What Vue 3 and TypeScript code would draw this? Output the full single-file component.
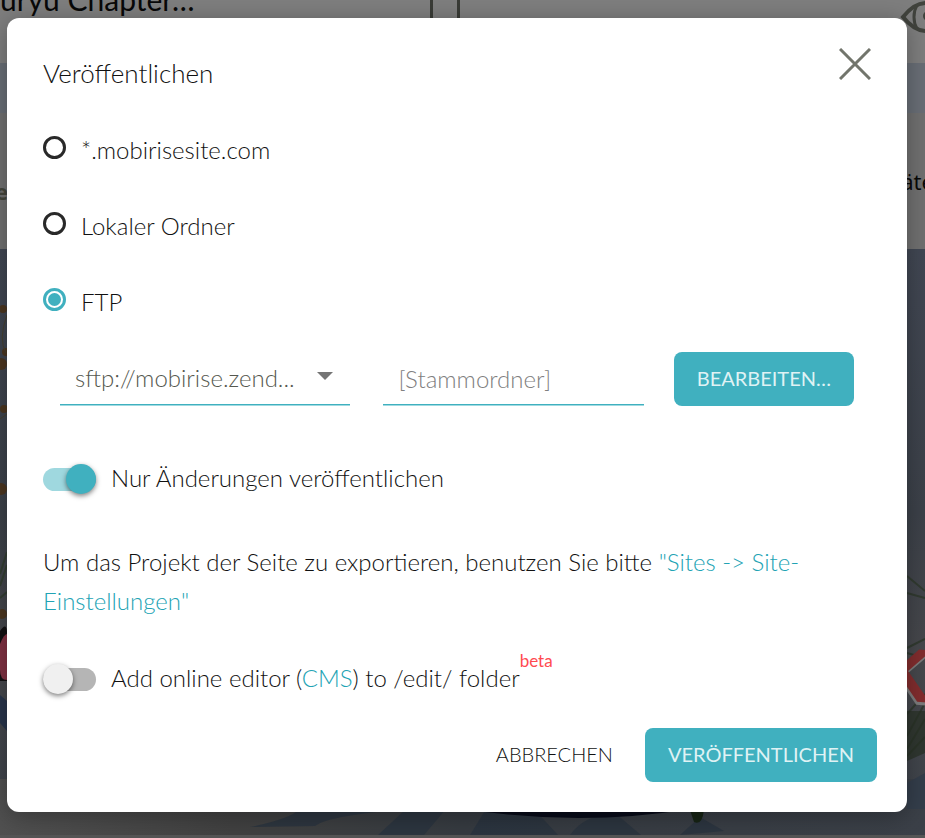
<script setup lang="ts">
import { ref } from 'vue'

type Target = 'mobirise' | 'local' | 'ftp'

const targets: { id: Target; label: string }[] = [
  { id: 'mobirise', label: '*.mobirisesite.com' },
  { id: 'local', label: 'Lokaler Ordner' },
  { id: 'ftp', label: 'FTP' },
]

const target = ref<Target>('ftp')
const server = ref('sftp')
const folder = ref('')
const changesOnly = ref(true)
const onlineEditor = ref(false)
</script>

<template>
  <div class="screen">
    <div class="page" aria-hidden="true">
      <div class="topbar">
        <span class="site-name">uryu Chapter…</span>
        <span class="device"></span>
        <svg class="eye" viewBox="0 0 52 32" fill="none" stroke="#41433d" stroke-width="4">
          <path d="M3 16C11 6 18 2 26 2s15 4 23 14C41 26 34 30 26 30S11 26 3 16Z" />
          <path d="M17 4c-4 7-4 17 0 24M35 4c4 7 4 17 0 24" stroke-width="3" />
          <circle cx="28" cy="15" r="5" fill="#41433d" stroke="none" />
        </svg>
      </div>
      <div class="band"></div>
      <div class="menu">
        <span class="menu-start">e</span>
        <span class="menu-end">äter</span>
      </div>
      <svg class="photo" viewBox="0 0 925 586" preserveAspectRatio="xMidYMid slice">
        <defs>
          <linearGradient id="sky" x1="0" y1="0" x2="0" y2="1">
            <stop offset="0" stop-color="#414753" />
            <stop offset="0.45" stop-color="#3c4149" />
            <stop offset="0.7" stop-color="#47484c" />
            <stop offset="1" stop-color="#3d434b" />
          </linearGradient>
          <linearGradient id="ground" x1="0" y1="0" x2="1" y2="0">
            <stop offset="0" stop-color="#505050" />
            <stop offset="0.25" stop-color="#414141" />
            <stop offset="0.5" stop-color="#363b41" />
            <stop offset="1" stop-color="#3b4048" />
          </linearGradient>
        </defs>
        <rect width="925" height="586" fill="url(#sky)" />
        <rect y="530" width="925" height="56" fill="url(#ground)" />
        <path d="M250 578Q290 570 300 560H410Q330 566 315 577ZM378 586l28-26h40l-22 26ZM470 586l16-26h48l24 26ZM570 586q14-20 45-22l26 22ZM680 586l20-18 24 14Z" fill="#29333e" opacity="0.8" />
        <path d="M464 560Q580 578 690 560Z" fill="#080b19" />
        <path d="M690 561h14q-2 16-10 12Z" fill="#172415" />
        <g fill="#4b3620">
          <circle cx="3" cy="60" r="4" />
          <circle cx="6" cy="103" r="4" />
          <circle cx="1" cy="115" r="6" />
          <circle cx="4" cy="160" r="4" />
          <circle cx="1" cy="240" r="6" />
          <circle cx="2" cy="365" r="5" />
          <circle cx="0" cy="424" r="6" />
        </g>
        <path d="M7 66Q-2 90 6 104M0 170L7 165" stroke="#46402f" fill="none" />
        <path d="M0 325L7 303M0 337L7 316M0 349L7 343" stroke="#333e32" stroke-width="2" fill="none" />
        <path d="M0 382q6-9 7 0v50H0Z" fill="#121012" />
        <path d="M0 395q4-10 7-10v46q-7 0-7-10Z" fill="#803142" />
        <path d="M0 446l7 6v30l-7-8Z" fill="#29354b" />
        <g stroke="#313a30" stroke-width="2" fill="none">
          <path d="M907 327l18 15M907 344l18 5M925 390l-18 9M925 409l-18-5M907 487l18-33M925 470l-18 30M907 465l18-20M925 488l-18 19" />
        </g>
        <path d="M907 462h18v42l-18 8Z" fill="#283025" opacity="0.7" />
        <path d="M907 534l18-10v36h-18Z" fill="#343e4b" />
        <g font-family="Liberation Sans, sans-serif" font-weight="700" font-size="76">
          <text x="875" y="453" transform="rotate(4 875 453)" fill="#7c7c7c">K</text>
          <text x="876" y="450" transform="rotate(4 876 450)" fill="#822d2e">K</text>
        </g>
      </svg>
    </div>

    <form class="dialog" role="dialog" aria-labelledby="dialog-title" @submit.prevent>
      <header class="dialog-head">
        <h1 id="dialog-title">Veröffentlichen</h1>
        <button class="close" type="button" aria-label="Schließen">
          <svg viewBox="0 0 32 32" fill="none" stroke="#72756c" stroke-width="3">
            <path d="M1 1L31 31M31 1L1 31" />
          </svg>
        </button>
      </header>

      <div class="targets" role="radiogroup" aria-labelledby="dialog-title">
        <label v-for="item in targets" :key="item.id" class="target">
          <input v-model="target" type="radio" name="target" :value="item.id" />
          <span>{{ item.label }}</span>
        </label>
      </div>

      <div class="fields">
        <div class="picker">
          <select v-model="server" aria-label="Server">
            <option value="sftp">sftp://mobirise.zend...</option>
          </select>
          <svg class="caret" viewBox="0 0 16 8"><path d="M0 0H16L8 8Z" fill="#757575" /></svg>
        </div>
        <input v-model="folder" class="folder" type="text" placeholder="[Stammordner]" aria-label="Stammordner" />
        <button class="primary" type="button">BEARBEITEN…</button>
      </div>

      <div class="switch-row changes">
        <input id="changes-only" v-model="changesOnly" class="switch" type="checkbox" />
        <label for="changes-only">Nur Änderungen veröffentlichen</label>
      </div>

      <p class="hint">
        Um das Projekt der Seite zu exportieren, benutzen Sie bitte
        <a href="#sites">"Sites -&gt; Site-Einstellungen"</a>
      </p>

      <div class="switch-row editor">
        <input id="online-editor" v-model="onlineEditor" class="switch" type="checkbox" />
        <label for="online-editor">Add online editor (<a href="#cms">CMS</a>) to /edit/ folder<sup>beta</sup></label>
      </div>

      <footer class="actions">
        <button class="plain" type="button">ABBRECHEN</button>
        <button class="primary" type="submit">VERÖFFENTLICHEN</button>
      </footer>
    </form>
  </div>
</template>

<style>
body {
  margin: 0;
  background: #555;
}
</style>

<style scoped>
* {
  box-sizing: border-box;
}

.screen {
  position: relative;
  min-height: 100vh;
  padding: 18px 18px 26px 7px;
  overflow: hidden;
  color: #111;
  font-family: Lato, 'Open Sans', sans-serif;
  font-size: 24px;
  font-weight: 300;
  line-height: 36px;
}

/* Editor page behind the dialog, scrolled up a little */
.page {
  position: absolute;
  inset: -40px 0 0;
  display: flex;
  flex-direction: column;
  background: #555;
}

.topbar {
  display: flex;
  justify-content: space-between;
  flex: none;
  height: 103px;
  padding-top: 21px;
  background: #7e7e7e;
  color: #080808;
  font-size: 30px;
  font-weight: 400;
}

.site-name {
  flex: 1;
}

.device {
  width: 30px;
  height: 64px;
  border: 3px solid #393b36;
}

.topbar .eye {
  flex: none;
  width: 52px;
  height: 32px;
  margin: 20px -27px 0 440px;
}

.band {
  flex: none;
  height: 50px;
  background: #696e76;
}

.menu {
  display: flex;
  justify-content: space-between;
  align-items: center;
  flex: none;
  height: 136px;
  background: #707070;
  font-family: 'Noto Sans', sans-serif;
  font-size: 22px;
  font-weight: 400;
}

.menu-start {
  margin-left: -5px;
  padding-top: 20px;
  color: #44463c;
  font-weight: 700;
}

.menu-end {
  margin-right: -18px;
  color: #080808;
}

.photo {
  flex: 1;
  width: 100%;
  min-height: 0;
  margin-bottom: 3px;
}

.dialog {
  position: relative;
  padding: 30px 30px 30px 36px;
  border-radius: 12px;
  background: #fff;
  box-shadow: 0 4px 24px rgba(0, 0, 0, 0.3);
}

.dialog-head {
  display: flex;
  justify-content: space-between;
  align-items: flex-start;
}

h1 {
  margin: 0;
  padding-top: 7px;
  font-size: 26px;
  font-weight: 300;
}

button {
  border: 0;
  font-family: inherit;
  cursor: pointer;
}

.close {
  width: 32px;
  height: 32px;
  margin-right: 6px;
  padding: 0;
  background: none;
}

.close svg {
  display: block;
}

.targets {
  display: flex;
  flex-direction: column;
  gap: 40px;
  margin-top: 41px;
}

.target {
  display: flex;
  align-items: flex-start;
  gap: 15px;
}

.target input {
  display: grid;
  place-content: center;
  width: 23px;
  height: 23px;
  margin: 4px 0 0;
  border: 3px solid #292929;
  border-radius: 50%;
  appearance: none;
}

.target input:checked {
  border-color: #40b0bf;
}

.target input:checked::before {
  width: 13px;
  height: 13px;
  border-radius: 50%;
  background: #40b0bf;
  content: '';
}

.fields {
  display: grid;
  grid-template-columns: minmax(0, 323fr) minmax(0, 290fr) auto;
  margin: 32px 23px 0 17px;
}

.picker {
  position: relative;
  margin-right: 33px;
}

.picker select,
.folder {
  height: 53px;
  padding: 0 15px;
  border: 0;
  border-bottom: 1px solid #40b0bf;
  border-radius: 0;
  background: none;
  box-shadow: 0 1px #9fdae1;
  color: #55584f;
  font: inherit;
  appearance: none;
}

.picker select {
  width: 100%;
}

.folder {
  width: auto;
  min-width: 0;
  margin-right: 30px;
}

.folder::placeholder {
  color: #808080;
}

.caret {
  position: absolute;
  top: 20px;
  right: 17px;
  width: 16px;
  height: 8px;
  pointer-events: none;
}

.primary {
  height: 54px;
  padding: 0 23px 2px;
  border-radius: 8px;
  background: #40b0bf;
  color: #dff2f4;
  font-size: 20px;
  white-space: nowrap;
}

.switch-row {
  display: flex;
  align-items: center;
  gap: 15px;
  height: 40px;
}

.switch-row label {
  padding-bottom: 2px;
}

.changes {
  margin-top: 53px;
}

.editor {
  margin-top: 39px;
}

.switch {
  display: flex;
  align-items: center;
  flex: none;
  width: 53px;
  height: 23px;
  margin: 0;
  border-radius: 12px;
  background: #b5b5b5;
  appearance: none;
}

.switch::before {
  width: 30px;
  height: 30px;
  border-radius: 50%;
  background: #f0f0f0;
  box-shadow: 0 2px 5px rgba(0, 0, 0, 0.5);
  content: '';
}

.switch:checked {
  justify-content: flex-end;
  background: #9fd8df;
}

.switch:checked::before {
  background: #40b0bf;
}

a {
  color: #22a3b4;
  text-decoration: none;
}

.hint {
  margin: 43px 60px 0 0;
  line-height: 39px;
}

sup {
  color: #ff4a50;
  font-size: 17px;
  font-weight: 400;
  line-height: 0;
  vertical-align: 20px;
}

.actions {
  display: flex;
  justify-content: flex-end;
  gap: 8px;
  margin-top: 29px;
}

.plain {
  padding: 0 24px 2px;
  background: none;
  color: #111;
  font-size: 20px;
  font-weight: 300;
}
</style>
